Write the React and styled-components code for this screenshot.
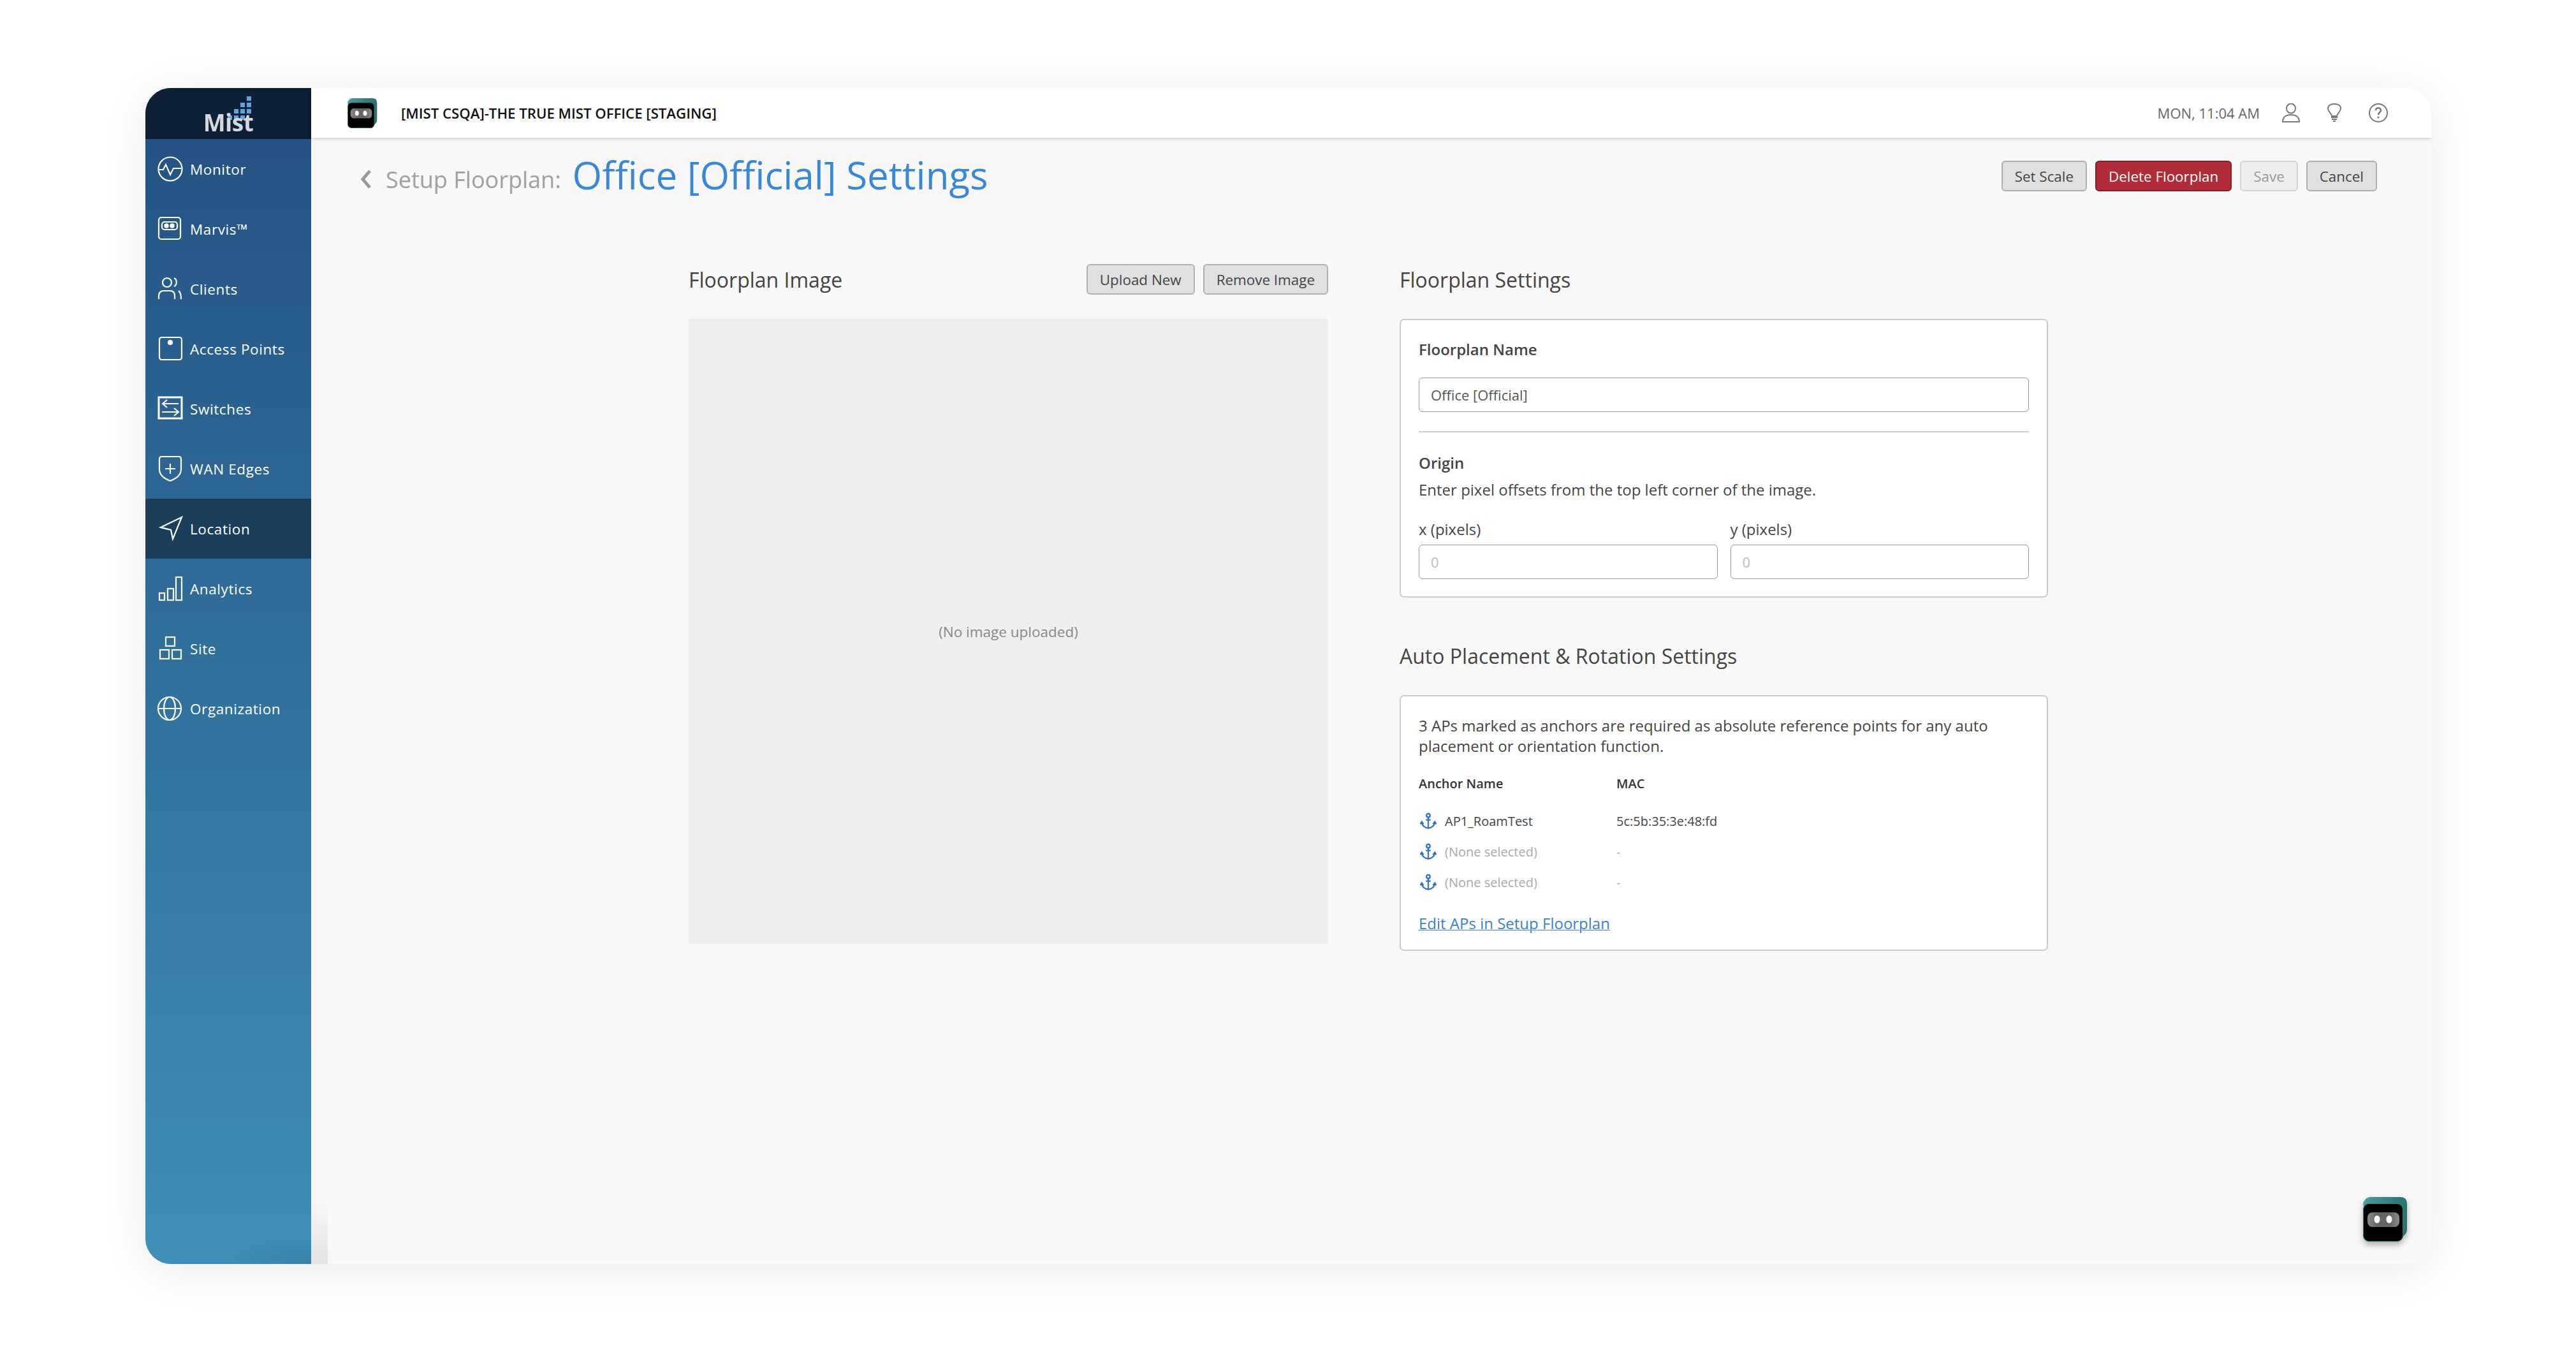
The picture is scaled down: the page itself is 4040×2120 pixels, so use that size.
import * as React from 'react';
import styled, { createGlobalStyle } from 'styled-components';

const GlobalStyle = createGlobalStyle`
    html, body {
        margin:0;
        padding:0;
        background:#fff;
    }
    body {
        font-family:"Open Sans", "Liberation Sans", sans-serif;
        color:#444;
    }
    * {
        box-sizing:border-box;
    }
`;

const Page = styled.div`
    width:4040px;
    height:2120px;
    padding:138px 0 0 228px;
`;

const Window = styled.div`
    position:relative;
    display:flex;
    width:3585px;
    height:1844px;
    border-radius:40px;
    overflow:hidden;
    background:#f8f8f8;
    box-shadow:0 10px 70px rgba(0,0,0,.09);
`;

const Sidebar = styled.nav`
    flex:0 0 260px;
    display:flex;
    flex-direction:column;
    background:
        radial-gradient(ellipse 150px 45px at 100% 100%, rgba(0,0,0,.1), rgba(0,0,0,0)),
        linear-gradient(180deg, #235081 0%, #3f90b9 100%);
`;

const LogoBar = styled.div`
    position:relative;
    height:80px;
    background:#0e2035;
    display:flex;
    justify-content:center;
    align-items:flex-end;
`;

const LogoText = styled.span`
    font-size:37px;
    line-height:42px;
    margin:0 0 5px 0;
    font-weight:700;
    letter-spacing:-.5px;
    color:#d4d8dc;
    filter:blur(.6px);
`;

const LogoDots = styled.svg`
    position:absolute;
    left:129px;
    top:13px;
`;

const NavItem = styled.div`
    display:flex;
    align-items:center;
    height:94px;
    padding-left:19px;
    gap:11px;
    color:#fff;
    font-size:22.5px;
    letter-spacing:.6px;
    background:${props => props.$active ? '#1b3e5a' : 'transparent'};
`;

const IconSlot = styled.svg`
    flex:0 0 40px;
    width:40px;
    height:40px;
    fill:none;
    stroke:#fff;
    stroke-width:2.2;
`;

const Main = styled.div`
    flex:1;
    display:flex;
    flex-direction:column;
    min-width:0;
`;

const TopBar = styled.header`
    position:relative;
    z-index:2;
    flex:0 0 78px;
    display:flex;
    align-items:center;
    padding:0 68px 0 57px;
    background:#fff;
    box-shadow:0 2px 5px rgba(0,0,0,.16);
`;

const SiteName = styled.div`
    margin-left:37px;
    font-size:22.2px;
    font-weight:600;
    color:#111;
    flex:1;
`;

const Clock = styled.div`
    font-size:22px;
    color:#666;
    margin-right:35px;
`;

const TopIcons = styled.div`
    display:flex;
    align-items:center;
    gap:43px;
`;

const TopIcon = styled.svg`
    display:block;
    fill:none;
    stroke:#777;
    stroke-width:2;
`;

const Content = styled.main`
    flex:1;
    padding:36px 85px 0 77px;
`;

const HeaderRow = styled.div`
    display:flex;
    align-items:center;
    justify-content:space-between;
    height:48px;
`;

const Breadcrumb = styled.div`
    display:flex;
    align-items:center;
`;

const BackIcon = styled.svg`
    margin-right:22px;
    margin-top:10px;
`;

const Crumb = styled.span`
    font-size:36px;
    color:#a0a0a0;
    margin-top:10px;
`;

const Title = styled.h1`
    margin:-5px 0 0 18px;
    font-size:60px;
    line-height:60px;
    font-weight:400;
    color:#3a87d8;
`;

const ButtonRow = styled.div`
    display:flex;
    gap:13px;
`;

const Button = styled.button`
    height:48px;
    padding:0 19px;
    font-family:inherit;
    font-size:22.4px;
    border-radius:6px;
    color:${props => props.$disabled ? '#999' : props.$danger ? '#fff' : '#444'};
    background:${props => props.$disabled ? '#eee' : props.$danger ? '#b02c38' : '#e0e0e0'};
    border:2px solid ${props => props.$disabled ? '#d4d4d4' : props.$danger ? '#80202a' : '#b0b0b0'};
`;

const Columns = styled.div`
    display:grid;
    grid-template-columns:1003px 1017px;
    column-gap:112px;
    margin:114px 0 0 515px;
`;

const ColumnHead = styled.div`
    display:flex;
    align-items:center;
    justify-content:space-between;
    height:48px;
    margin-bottom:38px;
`;

const SectionTitle = styled.h2`
    margin:0;
    font-size:32px;
    font-weight:400;
    color:#444;
`;

const ImageBox = styled.div`
    height:980px;
    display:flex;
    align-items:center;
    justify-content:center;
    background:#efefef;
    color:#888;
    font-size:22.5px;
`;

const Card = styled.section`
    background:#fff;
    border:2px solid #ccc;
    border-radius:7px;
    padding:${props => props.$pad};
`;

const Label = styled.div`
    font-size:24px;
    font-weight:600;
    line-height:32px;
    color:#444;
`;

const Body = styled.div`
    font-size:24px;
    line-height:32px;
    color:#444;
`;

const Hint = styled(Body)`
    margin-top:10px;
`;

const Input = styled.input`
    display:block;
    width:100%;
    height:54px;
    padding:0 18px;
    font-family:inherit;
    font-size:22px;
    color:#555;
    background:#fff;
    border:1.5px solid #999;
    border-radius:6px;
    &::placeholder {
        color:#bbb;
    }
`;

const NameInput = styled(Input)`
    margin-top:28px;
`;

const Divider = styled.hr`
    margin:30px 0 32px;
    border:0;
    height:2px;
    background:#ccc;
`;

const PixelGrid = styled.div`
    display:grid;
    grid-template-columns:1fr 1fr;
    column-gap:20px;
    margin-top:30px;
`;

const PixelLabel = styled.div`
    font-size:24px;
    line-height:32px;
    margin-bottom:8px;
    color:#444;
`;

const SpacedTitle = styled(SectionTitle)`
    margin-top:68px;
    height:48px;
    line-height:48px;
    margin-bottom:37px;
`;

const AnchorTable = styled.div`
    display:grid;
    grid-template-columns:310px 1fr;
    margin-top:27px;
`;

const AnchorHead = styled.div`
    font-size:20px;
    font-weight:600;
    line-height:32px;
    color:#333;
    margin-bottom:18.5px;
`;

const AnchorCell = styled.div`
    display:flex;
    align-items:center;
    height:48px;
    gap:13px;
    padding-left:${props => props.$first ? 2 : 0}px;
    font-size:20px;
    color:${props => props.$muted ? '#aaa' : '#444'};
`;

const EditLink = styled.a`
    display:block;
    margin-top:24.5px;
    font-size:24px;
    line-height:32px;
    color:#3a7fc8;
    text-decoration:underline;
    text-decoration-thickness:1px;
`;

const BottomStrip = styled.div`
    position:absolute;
    left:260px;
    bottom:0;
    width:26px;
    height:100px;
    background:linear-gradient(180deg, rgba(0,0,0,0), rgba(0,0,0,.09));
`;

const FloatingBot = styled.div`
    position:absolute;
    right:37px;
    bottom:35px;
    z-index:3;
    line-height:0;
    filter:drop-shadow(0 5px 5px rgba(0,0,0,.3));
`;

const BotLogo = ({ size }) => (
    <svg width={size} height={size} viewBox="0 0 70 70">
        <defs>
            <linearGradient id="botTop" x1="0" y1="0" x2="1" y2="0">
                <stop offset="0" stopColor="#4f9a9c" />
                <stop offset="1" stopColor="#2a716f" />
            </linearGradient>
            <linearGradient id="botEye" x1="0" y1="0" x2="1" y2="0">
                <stop offset="0" stopColor="#8a8a8a" />
                <stop offset=".3" stopColor="#666" />
                <stop offset=".7" stopColor="#666" />
                <stop offset="1" stopColor="#8a8a8a" />
            </linearGradient>
        </defs>
        <path d="M11 0H58Q69 0 69 11V50Q69 58 62 62L58 66H10L0 10Q4 0 11 0Z" fill="url(#botTop)" />
        <rect x="0.5" y="10.5" width="62" height="59" rx="9" fill="#000" stroke="#2c7c7e" strokeWidth="1" />
        <rect x="7" y="24" width="50" height="23" rx="8" fill="url(#botEye)" />
        <ellipse cx="22" cy="35" rx="4.5" ry="6" fill="#fff" />
        <ellipse cx="41" cy="35" rx="4.5" ry="6" fill="#fff" />
    </svg>
);

const navIcons = {
    monitor: <>
        <circle cx="20" cy="20" r="18.5" />
        <path d="M3 21H9L13 13L20 29L25 19H37" />
    </>,
    marvis: <>
        <rect x="2" y="2" width="34" height="34" rx="4" />
        <rect x="7" y="9" width="24" height="12" rx="4" />
        <circle cx="14" cy="15" r="2.6" fill="#fff" />
        <circle cx="23" cy="15" r="2.6" fill="#fff" />
    </>,
    clients: <>
        <circle cx="15" cy="10" r="7" />
        <path d="M26 3C31 5 31 14 26 16" />
        <path d="M2 36V31C2 24 6 23 10 23H20C24 23 27 25 27 31V36" />
        <path d="M33 23C36 25 37 28 37 36" />
    </>,
    ap: <>
        <rect x="3" y="2" width="35" height="35" rx="3.5" />
        <circle cx="20" cy="10" r="4" fill="#fff" stroke="none" />
    </>,
    switches: <>
        <rect x="2" y="2" width="36" height="33" strokeWidth="3" />
        <path d="M8 12H33M15 6L8 12L15 18" />
        <path d="M7 25H33M26 19L33 25L26 31" />
    </>,
    wan: <>
        <path d="M7 1H33C36 1 37 2 37 5V21C37 30 28 36 20 39C12 36 3 30 3 21V5C3 2 4 1 7 1Z" />
        <path d="M20 12V28M12 20H28" />
    </>,
    location: <>
        <path d="M38 2L5 18L21 22L24 36Z" />
    </>,
    analytics: <>
        <rect x="3" y="27" width="8" height="11" />
        <rect x="16" y="20" width="9" height="18" />
        <rect x="29" y="2" width="9" height="36" />
    </>,
    site: <>
        <rect x="13" y="2" width="14" height="14" />
        <rect x="4" y="22" width="14" height="14" />
        <rect x="23" y="22" width="14" height="14" />
    </>,
    globe: <>
        <circle cx="19" cy="20" r="18" />
        <ellipse cx="19" cy="20" rx="9" ry="18" />
        <path d="M1 20H37" />
    </>,
};

const navItems = [
    { label: 'Monitor', icon: 'monitor' },
    { label: 'Marvis™', icon: 'marvis' },
    { label: 'Clients', icon: 'clients' },
    { label: 'Access Points', icon: 'ap' },
    { label: 'Switches', icon: 'switches' },
    { label: 'WAN Edges', icon: 'wan' },
    { label: 'Location', icon: 'location', active: true },
    { label: 'Analytics', icon: 'analytics' },
    { label: 'Site', icon: 'site' },
    { label: 'Organization', icon: 'globe' },
];

const dots = [
    [3, 0], [2, 1], [3, 1], [1, 2], [2, 2], [3, 2], [0, 3], [1, 3], [2, 3],
];

const AnchorIcon = () => (
    <svg width="26" height="27" viewBox="0 0 28 28" fill="none" stroke="#2f74bd" strokeWidth="2.4">
        <circle cx="14" cy="4.5" r="3" />
        <path d="M14 7.5V26M10 12H18" />
        <path d="M3 16C3 22 9 25.5 14 26C19 25.5 25 22 25 16" />
        <path d="M0.5 19L3 15L6 19M22 19L25 15L27.5 19" />
    </svg>
);

const Anchors = () => {
    const rows = [
        { name: 'AP1_RoamTest', mac: '5c:5b:35:3e:48:fd' },
        { name: '(None selected)', mac: '-', muted: true },
        { name: '(None selected)', mac: '-', muted: true },
    ];
    return <AnchorTable>
        <AnchorHead>Anchor Name</AnchorHead>
        <AnchorHead>MAC</AnchorHead>
        {rows.map((row, i) => <React.Fragment key={i}>
            <AnchorCell $first $muted={row.muted}><AnchorIcon />{row.name}</AnchorCell>
            <AnchorCell $muted={row.muted}>{row.mac}</AnchorCell>
        </React.Fragment>)}
    </AnchorTable>;
};

export default function App() {
    return <>
        <GlobalStyle />
        <Page>
            <Window>
                <Sidebar>
                    <LogoBar>
                        <LogoDots width="40" height="40" viewBox="0 0 40 40">
                            {dots.map(([c, r]) => <rect key={`${c}-${r}`} x={c * 10} y={r * 10} width="7" height="7" fill="#5ea3dc" />)}
                        </LogoDots>
                        <LogoText>Mist</LogoText>
                    </LogoBar>
                    {navItems.map(item => <NavItem key={item.label} $active={item.active}>
                        <IconSlot viewBox="0 0 40 40">{navIcons[item.icon]}</IconSlot>
                        {item.label}
                    </NavItem>)}
                </Sidebar>
                <BottomStrip />
                <Main>
                    <TopBar>
                        <BotLogo size={47} />
                        <SiteName>[MIST CSQA]-THE TRUE MIST OFFICE [STAGING]</SiteName>
                        <Clock>MON, 11:04 AM</Clock>
                        <TopIcons>
                            <TopIcon width="28" height="30" viewBox="0 0 28 30">
                                <ellipse cx="14" cy="8" rx="7" ry="7.5" />
                                <path d="M1 29C1 21 7 18 14 18C21 18 27 21 27 29Z" />
                            </TopIcon>
                            <TopIcon width="22" height="30" viewBox="0 0 22 30">
                                <path d="M7 20C6 15 1 13 1 8C1 3 6 1 11 1C16 1 21 3 21 8C21 13 16 15 15 20Z" />
                                <path d="M6 22H16M7 25H15M9 28H13" strokeWidth="2" />
                            </TopIcon>
                            <TopIcon width="30" height="30" viewBox="0 0 30 30">
                                <circle cx="15" cy="15" r="14" />
                                <path d="M11 11C11 6 19 6 19 11C19 14 15 14 15 18" strokeWidth="2.6" />
                                <circle cx="15" cy="22" r="1.6" fill="#777" stroke="none" />
                            </TopIcon>
                        </TopIcons>
                    </TopBar>
                    <Content>
                        <HeaderRow>
                            <Breadcrumb>
                                <BackIcon width="18" height="30" viewBox="0 0 18 30" fill="none" stroke="#999" strokeWidth="5">
                                    <path d="M15 2L4 15L15 28" />
                                </BackIcon>
                                <Crumb>Setup Floorplan:</Crumb>
                                <Title>Office [Official] Settings</Title>
                            </Breadcrumb>
                            <ButtonRow>
                                <Button>Set Scale</Button>
                                <Button $danger>Delete Floorplan</Button>
                                <Button $disabled>Save</Button>
                                <Button>Cancel</Button>
                            </ButtonRow>
                        </HeaderRow>
                        <Columns>
                            <div>
                                <ColumnHead>
                                    <SectionTitle>Floorplan Image</SectionTitle>
                                    <ButtonRow>
                                        <Button>Upload New</Button>
                                        <Button>Remove Image</Button>
                                    </ButtonRow>
                                </ColumnHead>
                                <ImageBox>(No image uploaded)</ImageBox>
                            </div>
                            <div>
                                <ColumnHead>
                                    <SectionTitle>Floorplan Settings</SectionTitle>
                                </ColumnHead>
                                <Card $pad="30px 28px 27px">
                                    <Label>Floorplan Name</Label>
                                    <NameInput readOnly value="Office [Official]" />
                                    <Divider />
                                    <Label>Origin</Label>
                                    <Hint>Enter pixel offsets from the top left corner of the image.</Hint>
                                    <PixelGrid>
                                        <div>
                                            <PixelLabel>x (pixels)</PixelLabel>
                                            <Input readOnly placeholder="0" />
                                        </div>
                                        <div>
                                            <PixelLabel>y (pixels)</PixelLabel>
                                            <Input readOnly placeholder="0" />
                                        </div>
                                    </PixelGrid>
                                </Card>
                                <SpacedTitle>Auto Placement &amp; Rotation Settings</SpacedTitle>
                                <Card $pad="30px 28px 25px">
                                    <Body>3 APs marked as anchors are required as absolute reference points for any auto placement or orientation function.</Body>
                                    <Anchors />
                                    <EditLink>Edit APs in Setup Floorplan</EditLink>
                                </Card>
                            </div>
                        </Columns>
                    </Content>
                </Main>
                <FloatingBot><BotLogo size={70} /></FloatingBot>
            </Window>
        </Page>
    </>;
}
